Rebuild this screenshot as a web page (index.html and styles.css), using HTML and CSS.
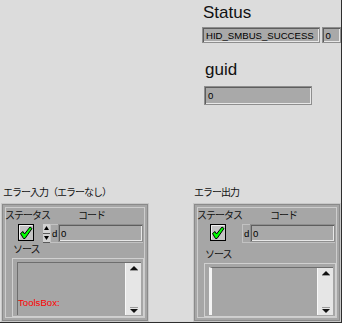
FILE: index.html
```html
<!DOCTYPE html>
<html lang="ja">
<head>
<meta charset="utf-8">
<title>Front Panel</title>
<link rel="stylesheet" href="styles.css">
</head>
<body>
<div class="panel">
  <div class="top">
    <div class="big status-label">Status</div>
    <div class="status-row">
      <div class="field ring">HID_SMBUS_SUCCESS</div>
      <div class="field numcut">0</div>
    </div>
    <div class="big guid-label">guid</div>
    <div class="field guid-field">0</div>
  </div>
  <div class="bottom">
    <div class="errcol errcol-left">
      <div class="small errlabel">エラー入力（エラーなし）</div>
      <div class="cluster">
        <div class="small cl-head"><span class="st">ステータス</span><span>コード</span></div>
        <div class="cl-row">
          <div class="chk">
            <svg width="16" height="17" viewBox="0 0 16 17"><rect x="0.5" y="0.5" width="15" height="16" fill="#c4c4c4" stroke="#000"/><path d="M1.5 15 V1.5 H14.5" stroke="#f0f0f0" fill="none"/><path d="M2.5 9.5 L5 7.5 L6.5 10 L12 3 L14 4.5 L7 14.5 L5.5 14.5 Z" fill="#00ff00" stroke="#000" stroke-width="1" stroke-linejoin="round"/></svg>
          </div>
          <div class="spin">
            <svg width="7" height="19" viewBox="0 0 7 19"><rect x="0" y="0" width="7" height="9" fill="#d2d2d2"/><rect x="0" y="10" width="7" height="9" fill="#d2d2d2"/><path d="M3.5 2 L6 6 L1 6 Z" fill="#000"/><path d="M1 12 L6 12 L3.5 16 Z" fill="#000"/><rect x="0" y="9" width="7" height="1" fill="#5a5a5a"/><rect x="0" y="18" width="7" height="1" fill="#5a5a5a"/></svg>
          </div>
          <div class="num"><span class="radix">d</span><div class="field numfield">0</div></div>
        </div>
        <div class="small src-label">ソース</div>
        <div class="src-box">
          <div class="src-inner">
            <div class="txt"><span class="red">ToolsBox:</span></div>
            <div class="sb">
              <svg width="8" height="5" viewBox="0 0 8 5"><path d="M4 0 L8 4 L0 4 Z" fill="#111"/><rect x="0" y="4" width="8" height="1" fill="#9a9a9a"/></svg>
              <svg width="8" height="6" viewBox="0 0 8 6"><rect x="0" y="0" width="8" height="1" fill="#9a9a9a"/><path d="M0 2 L8 2 L4 6 Z" fill="#111"/></svg>
            </div>
          </div>
        </div>
      </div>
    </div>
    <div class="errcol errcol-right">
      <div class="small errlabel">エラー出力</div>
      <div class="cluster">
        <div class="small cl-head"><span class="st">ステータス</span><span>コード</span></div>
        <div class="cl-row">
          <div class="chk">
            <svg width="16" height="17" viewBox="0 0 16 17"><rect x="0.5" y="0.5" width="15" height="16" fill="#c4c4c4" stroke="#000"/><path d="M1.5 15 V1.5 H14.5" stroke="#f0f0f0" fill="none"/><path d="M2.5 9.5 L5 7.5 L6.5 10 L12 3 L14 4.5 L7 14.5 L5.5 14.5 Z" fill="#00ff00" stroke="#000" stroke-width="1" stroke-linejoin="round"/></svg>
          </div>
          <div class="spacer"></div>
          <div class="num"><span class="radix">d</span><div class="field numfield">0</div></div>
        </div>
        <div class="small src-label src-label-right">ソース</div>
        <div class="src-box src-box-right">
          <div class="src-inner">
            <div class="txt"></div>
            <div class="sb">
              <svg width="8" height="5" viewBox="0 0 8 5"><path d="M4 0 L8 4 L0 4 Z" fill="#111"/><rect x="0" y="4" width="8" height="1" fill="#9a9a9a"/></svg>
              <svg width="8" height="6" viewBox="0 0 8 6"><rect x="0" y="0" width="8" height="1" fill="#9a9a9a"/><path d="M0 2 L8 2 L4 6 Z" fill="#111"/></svg>
            </div>
          </div>
        </div>
      </div>
    </div>
  </div>
</div>
</body>
</html>
```
FILE: styles.css
```css
* { box-sizing: border-box; }
html, body { margin: 0; padding: 0; }
body {
  width: 342px;
  height: 323px;
  overflow: hidden;
  background: #dcdcdc;
  font-family: "Liberation Sans", Arial, sans-serif;
  color: #111;
}
.panel {
  width: 342px;
  height: 323px;
  border-right: 1px solid #2e2e2e;
  border-bottom: 1px solid #2e2e2e;
  background: #dcdcdc;
  overflow: hidden;
}
.top {
  height: 186px;
  padding: 3px 0 0 202px;
}
.big {
  font-size: 17px;
  line-height: 20px;
  height: 20px;
  color: #111;
}
.status-label { margin-left: 1px; }
.status-row { display: flex; margin-top: 4px; }
.field {
  background: #a9a9a9;
  border: 1px solid #8e8e8e;
  box-shadow: inset 1px 1px 0 #5e5e5e, inset -1px -1px 0 #e8e8e8;
  font-size: 9.6px;
  display: flex;
  align-items: center;
  padding-left: 3px;
  color: #000;
  white-space: nowrap;
  overflow: hidden;
}
.ring { width: 122px; height: 16px; }
.numcut { width: 20px; height: 16px; margin-left: 2px; }
.guid-label { margin-top: 17px; margin-left: 3px; }
.guid-field { margin-top: 6px; margin-left: 2px; width: 108px; height: 19px; }

.bottom { display: flex; }
.errcol { width: 148px; }
.errcol-left { margin-left: 1px; }
.errcol-right { margin-left: 44px; }
.small {
  font-family: "Noto Sans CJK JP", "Liberation Sans", sans-serif;
  font-size: 10px;
  line-height: 12px;
  letter-spacing: -1px;
  white-space: nowrap;
  color: #111;
}
.errlabel { height: 12px; margin-left: 2px; }
.errcol-right .errlabel { margin-left: 1px; }
.cluster {
  margin-top: 5px;
  height: 119px;
  background: #a6a6a6;
  border: 1px solid #c8c8c8;
  box-shadow: inset 0 0 0 1px #8a8a8a, inset 0 0 0 3px #a6a6a6, inset 0 0 0 4px #cdcdcd;
  padding: 5px 2px 0 2px;
}
.cl-head { display: flex; height: 12px; margin-left: 1px; }
.cl-head .st { width: 73px; }
.cl-row { display: flex; align-items: flex-start; height: 19px; margin-top: 3px; }
.chk { width: 16px; height: 17px; margin-left: 14px; }
.chk svg, .spin svg, .sb svg { display: block; }
.spin { width: 7px; height: 19px; margin-left: 9px; }
.spacer { width: 7px; margin-left: 9px; }
.num {
  display: flex;
  width: 93px;
  height: 19px;
  border: 1px solid #c2c2c2;
  border-right: none;
}
.radix {
  width: 7px;
  font-size: 9.6px;
  line-height: 17px;
  padding-left: 1px;
  color: #000;
}
.numfield { flex: 1; height: 18px; padding-left: 2px; margin-top: -1px; }
.src-label { margin-left: 9px; height: 12px; }
.src-label-right { margin-top: 5px; }
.src-box {
  margin-left: 8px;
  margin-top: 3px;
  width: 132px;
  height: 59px;
  background: #a6a6a6;
  border: 1px solid #d0d0d0;
  padding: 3px 2px 1px 4px;
}
.src-box-right { height: 54px; }
.src-inner {
  height: 100%;
  display: flex;
  border-top: 1px solid #6e6e6e;
  border-left: 1px solid #6e6e6e;
}
.src-box-right .src-inner { border-left: 3px solid #f4f4f4; }
.txt {
  flex: 1;
  display: flex;
  flex-direction: column;
  justify-content: flex-end;
  padding-bottom: 6px;
}
.red {
  color: #ff0000;
  font-size: 9.6px;
  line-height: 12px;
}
.sb {
  width: 16px;
  background: #e6e6e6;
  border-left: 1px solid #f8f8f8;
  display: flex;
  flex-direction: column;
  justify-content: space-between;
  align-items: center;
  padding: 3px 0 2px 0;
}
```
